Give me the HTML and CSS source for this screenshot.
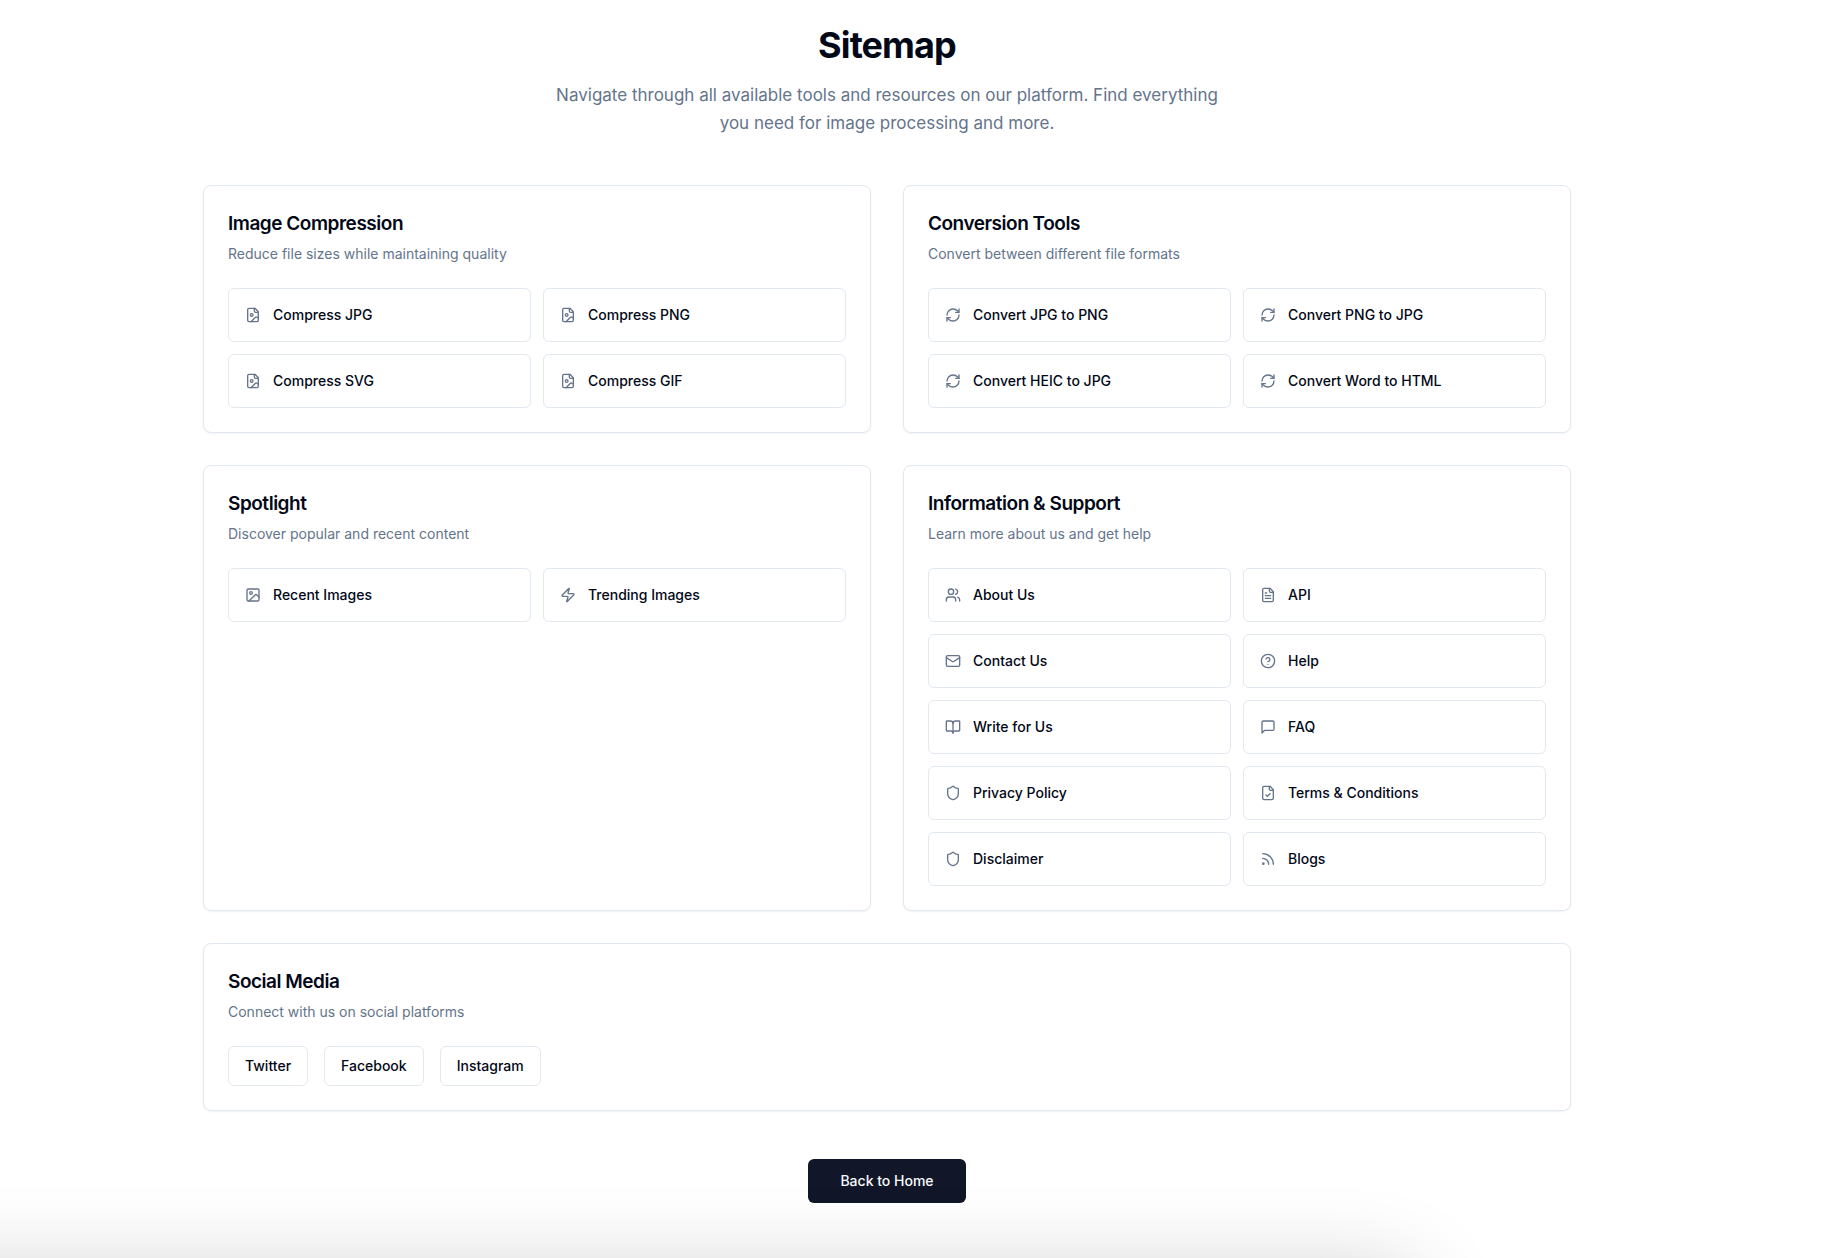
FILE: index.html
```html
<!DOCTYPE html>
<html lang="en">
<head>
<meta charset="utf-8">
<meta name="viewport" content="width=device-width, initial-scale=1">
<title>Sitemap</title>
<link rel="stylesheet" href="styles.css">
</head>
<body>
<svg class="sprite" aria-hidden="true">
  <symbol id="file-image" viewBox="0 0 24 24"><path d="M15 2H6a2 2 0 0 0-2 2v16a2 2 0 0 0 2 2h12a2 2 0 0 0 2-2V7Z"/><path d="M14 2v4a2 2 0 0 0 2 2h4"/><circle cx="10" cy="12" r="2"/><path d="m20 17-1.296-1.296a2.41 2.41 0 0 0-3.408 0L9 22"/></symbol>
  <symbol id="refresh" viewBox="0 0 24 24"><path d="M3 12a9 9 0 0 1 9-9 9.75 9.75 0 0 1 6.74 2.74L21 8"/><path d="M21 3v5h-5"/><path d="M21 12a9 9 0 0 1-9 9 9.75 9.75 0 0 1-6.74-2.74L3 16"/><path d="M8 16H3v5"/></symbol>
  <symbol id="image" viewBox="0 0 24 24"><rect width="18" height="18" x="3" y="3" rx="2"/><circle cx="9" cy="9" r="2"/><path d="m21 15-3.086-3.086a2 2 0 0 0-2.828 0L6 21"/></symbol>
  <symbol id="zap" viewBox="0 0 24 24"><path d="M4 14a1 1 0 0 1-.78-1.63l9.9-10.2a.5.5 0 0 1 .86.46l-1.92 6.02A1 1 0 0 0 13 10h7a1 1 0 0 1 .78 1.63l-9.9 10.2a.5.5 0 0 1-.86-.46l1.92-6.02A1 1 0 0 0 11 14z"/></symbol>
  <symbol id="users" viewBox="0 0 24 24"><path d="M16 21v-2a4 4 0 0 0-4-4H6a4 4 0 0 0-4 4v2"/><circle cx="9" cy="7" r="4"/><path d="M22 21v-2a4 4 0 0 0-3-3.87"/><path d="M16 3.13a4 4 0 0 1 0 7.75"/></symbol>
  <symbol id="file-text" viewBox="0 0 24 24"><path d="M15 2H6a2 2 0 0 0-2 2v16a2 2 0 0 0 2 2h12a2 2 0 0 0 2-2V7Z"/><path d="M14 2v4a2 2 0 0 0 2 2h4"/><path d="M10 9H8"/><path d="M16 13H8"/><path d="M16 17H8"/></symbol>
  <symbol id="mail" viewBox="0 0 24 24"><rect width="20" height="16" x="2" y="4" rx="2"/><path d="m22 7-8.97 5.7a1.94 1.94 0 0 1-2.06 0L2 7"/></symbol>
  <symbol id="help" viewBox="0 0 24 24"><circle cx="12" cy="12" r="10"/><path d="M9.09 9a3 3 0 0 1 5.83 1c0 2-3 3-3 3"/><path d="M12 17h.01"/></symbol>
  <symbol id="book" viewBox="0 0 24 24"><path d="M12 7v14"/><path d="M3 18a1 1 0 0 1-1-1V4a1 1 0 0 1 1-1h5a4 4 0 0 1 4 4 4 4 0 0 1 4-4h5a1 1 0 0 1 1 1v13a1 1 0 0 1-1 1h-6a3 3 0 0 0-3 3 3 3 0 0 0-3-3z"/></symbol>
  <symbol id="message" viewBox="0 0 24 24"><path d="M21 15a2 2 0 0 1-2 2H7l-4 4V5a2 2 0 0 1 2-2h14a2 2 0 0 1 2 2z"/></symbol>
  <symbol id="shield" viewBox="0 0 24 24"><path d="M20 13c0 5-3.5 7.5-7.66 8.95a1 1 0 0 1-.67-.01C7.5 20.5 4 18 4 13V6a1 1 0 0 1 1-1c2 0 4.5-1.2 6.24-2.72a1.17 1.17 0 0 1 1.52 0C14.51 3.81 17 5 19 5a1 1 0 0 1 1 1z"/></symbol>
  <symbol id="file-check" viewBox="0 0 24 24"><path d="M15 2H6a2 2 0 0 0-2 2v16a2 2 0 0 0 2 2h12a2 2 0 0 0 2-2V7Z"/><path d="M14 2v4a2 2 0 0 0 2 2h4"/><path d="m9 15 2 2 4-4"/></symbol>
  <symbol id="rss" viewBox="0 0 24 24"><path d="M4 11a9 9 0 0 1 9 9"/><path d="M4 4a16 16 0 0 1 16 16"/><circle cx="5" cy="19" r="1"/></symbol>
</svg>

<main class="page">
  <header class="intro">
    <h1 class="intro-title">Sitemap</h1>
    <p class="intro-text">Navigate through all available tools and resources on our platform. Find everything you need for image processing and more.</p>
  </header>

  <div class="sections">
    <section class="card">
      <h2 class="card-title">Image Compression</h2>
      <p class="card-text">Reduce file sizes while maintaining quality</p>
      <nav class="links" aria-label="Image Compression">
        <a class="link" href="#"><svg class="icon"><use href="#file-image"/></svg>Compress JPG</a>
        <a class="link" href="#"><svg class="icon"><use href="#file-image"/></svg>Compress PNG</a>
        <a class="link" href="#"><svg class="icon"><use href="#file-image"/></svg>Compress SVG</a>
        <a class="link" href="#"><svg class="icon"><use href="#file-image"/></svg>Compress GIF</a>
      </nav>
    </section>

    <section class="card">
      <h2 class="card-title">Conversion Tools</h2>
      <p class="card-text">Convert between different file formats</p>
      <nav class="links" aria-label="Conversion Tools">
        <a class="link" href="#"><svg class="icon"><use href="#refresh"/></svg>Convert JPG to PNG</a>
        <a class="link" href="#"><svg class="icon"><use href="#refresh"/></svg>Convert PNG to JPG</a>
        <a class="link" href="#"><svg class="icon"><use href="#refresh"/></svg>Convert HEIC to JPG</a>
        <a class="link" href="#"><svg class="icon"><use href="#refresh"/></svg>Convert Word to HTML</a>
      </nav>
    </section>

    <section class="card">
      <h2 class="card-title">Spotlight</h2>
      <p class="card-text">Discover popular and recent content</p>
      <nav class="links" aria-label="Spotlight">
        <a class="link" href="#"><svg class="icon"><use href="#image"/></svg>Recent Images</a>
        <a class="link" href="#"><svg class="icon"><use href="#zap"/></svg>Trending Images</a>
      </nav>
    </section>

    <section class="card">
      <h2 class="card-title">Information &amp; Support</h2>
      <p class="card-text">Learn more about us and get help</p>
      <nav class="links" aria-label="Information and Support">
        <a class="link" href="#"><svg class="icon"><use href="#users"/></svg>About Us</a>
        <a class="link" href="#"><svg class="icon"><use href="#file-text"/></svg>API</a>
        <a class="link" href="#"><svg class="icon"><use href="#mail"/></svg>Contact Us</a>
        <a class="link" href="#"><svg class="icon"><use href="#help"/></svg>Help</a>
        <a class="link" href="#"><svg class="icon"><use href="#book"/></svg>Write for Us</a>
        <a class="link" href="#"><svg class="icon"><use href="#message"/></svg>FAQ</a>
        <a class="link" href="#"><svg class="icon"><use href="#shield"/></svg>Privacy Policy</a>
        <a class="link" href="#"><svg class="icon"><use href="#file-check"/></svg>Terms &amp; Conditions</a>
        <a class="link" href="#"><svg class="icon"><use href="#shield"/></svg>Disclaimer</a>
        <a class="link" href="#"><svg class="icon"><use href="#rss"/></svg>Blogs</a>
      </nav>
    </section>

    <section class="card card-wide">
      <h2 class="card-title">Social Media</h2>
      <p class="card-text">Connect with us on social platforms</p>
      <nav class="social" aria-label="Social Media">
        <a class="social-link" href="#">Twitter</a>
        <a class="social-link" href="#">Facebook</a>
        <a class="social-link" href="#">Instagram</a>
      </nav>
    </section>
  </div>

  <a class="home-link" href="#">Back to Home</a>
</main>
</body>
</html>
```
FILE: styles.css
```css
* {
  box-sizing: border-box;
}

body {
  margin: 0;
  padding-right: 60px;
  background: #fff;
  color: #020817;
  font: 400 14px/20px Inter, "Liberation Sans", sans-serif;
}

/* soft shade rising from the lower edge of the window */
body::after {
  content: "";
  position: fixed;
  top: calc(100% + 20px);
  left: -200px;
  right: 424px;
  height: 400px;
  box-shadow: 0 0 84px rgba(0, 0, 0, 0.23);
  pointer-events: none;
}

h1,
h2,
p {
  margin: 0;
}

a {
  color: inherit;
  text-decoration: none;
}

.sprite {
  display: none;
}

.page {
  display: flex;
  flex-direction: column;
  align-items: center;
  gap: 48px;
  max-width: 1400px;
  margin: 0 auto;
  padding: 25px 16px;
}

.intro {
  display: flex;
  flex-direction: column;
  gap: 16px;
  max-width: 672px;
  text-align: center;
}

.intro-title {
  font-size: 36px;
  line-height: 40px;
  font-weight: 700;
  letter-spacing: -0.025em;
}

.intro-text {
  font-size: 17px;
  line-height: 28px;
  color: #64748b;
}

.sections {
  display: grid;
  grid-template-columns: repeat(2, minmax(0, 1fr));
  gap: 32px;
  width: 100%;
}

.card {
  padding: 24px;
  border: 1px solid #e2e8f0;
  border-radius: 8px;
  background: #fff;
  box-shadow: 0 1px 2px rgba(0, 0, 0, 0.05);
}

.card-wide {
  grid-column: 1 / -1;
}

.card-title {
  font-size: 19px;
  line-height: 28px;
  font-weight: 600;
  letter-spacing: -0.025em;
}

.card-text {
  margin-top: 6px;
  color: #64748b;
}

.links {
  display: grid;
  grid-template-columns: repeat(2, minmax(0, 1fr));
  gap: 12px;
  margin-top: 24px;
}

.link {
  display: flex;
  align-items: center;
  gap: 12px;
  padding: 16px;
  border: 1px solid #e2e8f0;
  border-radius: 6px;
  font-weight: 500;
}

.icon {
  flex: none;
  width: 16px;
  height: 16px;
  fill: none;
  stroke: #64748b;
  stroke-width: 2;
  stroke-linecap: round;
  stroke-linejoin: round;
}

.social {
  display: flex;
  flex-wrap: wrap;
  gap: 16px;
  margin-top: 24px;
}

.social-link {
  padding: 9px 16px;
  border: 1px solid #e2e8f0;
  border-radius: 6px;
  font-weight: 500;
}

.home-link {
  padding: 12px 32px;
  border-radius: 6px;
  background: #111729;
  color: #f8fafc;
  font-weight: 500;
}

@media (max-width: 800px) {
  body {
    padding-right: 0;
  }

  .sections {
    grid-template-columns: minmax(0, 1fr);
  }
}
```
